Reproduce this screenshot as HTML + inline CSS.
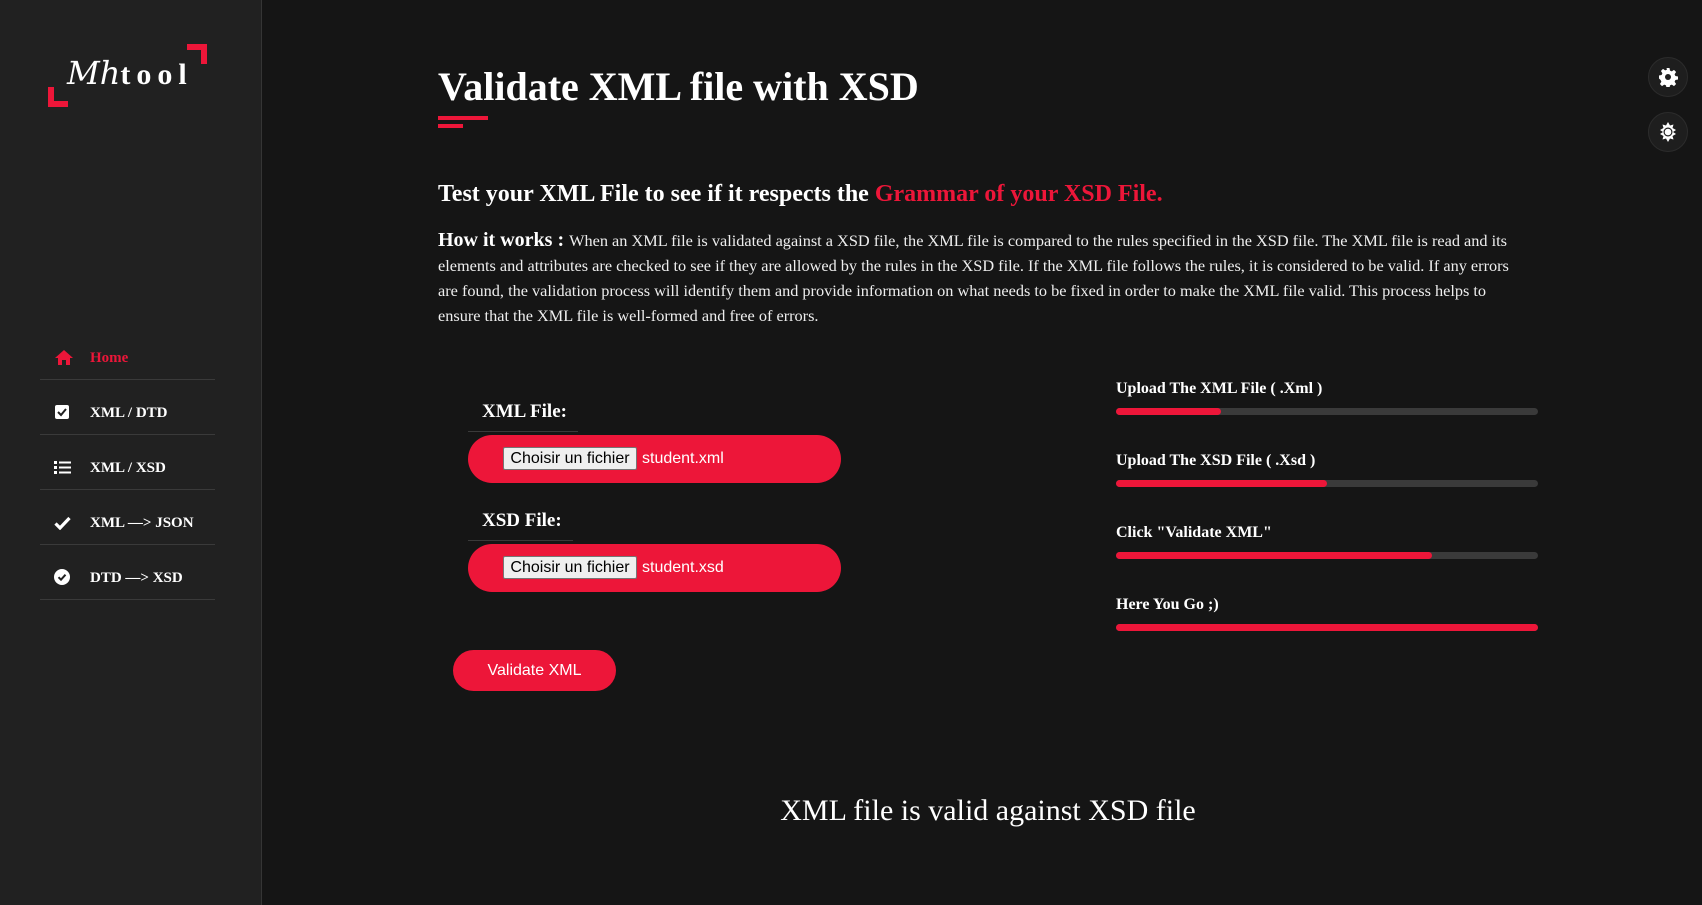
<!DOCTYPE html>
<html><head><meta charset="utf-8"><style>
*{margin:0;padding:0;box-sizing:border-box}
body{width:1702px;height:905px;background:#151515;font-family:"Liberation Serif",serif;color:#fff;position:relative;overflow:hidden}
.side{position:absolute;left:0;top:0;width:262px;height:905px;background:#212121;border-right:1px solid #353535}
.br{position:absolute;width:20px;height:20px;border-color:#ed1639;border-style:solid}
.nav{position:absolute;left:40px;width:175px;border-bottom:1px solid #3a3a3a;height:55px}
.nav span{position:absolute;left:50px;bottom:12px;font-weight:bold;font-size:15px}
.nav svg{position:absolute;left:14px;bottom:14px}
.abs{position:absolute}
h1{position:absolute;left:438px;top:63px;font-size:40px;font-weight:bold;white-space:nowrap}
.pill{position:absolute;left:468px;width:373px;height:48px;border-radius:24px;background:#ed1639}
.fb{position:absolute;left:35px;top:12px;width:134px;height:23px;background:#efefef;border:1px solid #767676;border-radius:2px;color:#000;font:16px "Liberation Sans",sans-serif;text-align:center;line-height:21px}
.fn{position:absolute;left:174px;top:13px;font:16px "Liberation Sans",sans-serif;line-height:22px}
.lbl{position:absolute;font-weight:bold;font-size:16px;left:1116px}
.bar{position:absolute;left:1116px;width:422px;height:7px;border-radius:4px;background:#3a3a3a}
.bar div{height:7px;border-radius:4px;background:#ed1639}
.circ{position:absolute;left:1648px;width:40px;height:40px;border-radius:50%;background:#1e1e1e;border:1px solid #2c2c2c}
</style></head><body>
<div class="side">
 <div class="br" style="left:48px;top:87px;border-width:0 0 6px 6px"></div>
 <div class="br" style="left:187px;top:44px;border-width:6px 6px 0 0"></div>
 <div class="abs" style="left:67px;top:54px;white-space:nowrap"><i style="font-family:'DejaVu Serif',serif;font-size:32px">Mh</i><b style="letter-spacing:6px;font-size:30px">tool</b></div>
 <div class="nav" style="top:325px"><svg width="20" height="16" viewBox="0 0 20 16"><path d="M10 1L1 9h3v7h4v-5h4v5h4V9h3z" fill="#ed1639"/></svg><span style="color:#ed1639">Home</span></div>
 <div class="nav" style="top:380px"><svg width="16" height="16" viewBox="0 0 16 16"><rect x="1" y="1" width="14" height="14" rx="2" fill="#fff"/><path d="M4 8l3 3 5-6" stroke="#212121" stroke-width="2" fill="none"/></svg><span>XML / DTD</span></div>
 <div class="nav" style="top:435px"><svg width="17" height="15" viewBox="0 0 17 15"><g fill="#fff"><rect x="0" y="1" width="3" height="3"/><rect x="0" y="6" width="3" height="3"/><rect x="0" y="11" width="3" height="3"/><rect x="5" y="1.5" width="12" height="2"/><rect x="5" y="6.5" width="12" height="2"/><rect x="5" y="11.5" width="12" height="2"/></g></svg><span>XML / XSD</span></div>
 <div class="nav" style="top:490px"><svg width="17" height="14" viewBox="0 0 17 14"><path d="M1.5 7.5l4.5 4.5 9.5-10" stroke="#fff" stroke-width="3.2" fill="none"/></svg><span>XML —&gt; JSON</span></div>
 <div class="nav" style="top:545px"><svg width="16" height="16" viewBox="0 0 16 16"><circle cx="8" cy="8" r="8" fill="#fff"/><path d="M4.5 8.2l2.5 2.5 4.5-5" stroke="#212121" stroke-width="2" fill="none"/></svg><span>DTD —&gt; XSD</span></div>
</div>
<div class="circ" style="top:57px"><svg style="position:absolute;left:9px;top:9px" width="20" height="20" viewBox="0 0 20 20"><path d="M8.5 1h3l.5 2.6 1.8.8 2.2-1.5 2.1 2.1-1.5 2.2.8 1.8 2.6.5v3l-2.6.5-.8 1.8 1.5 2.2-2.1 2.1-2.2-1.5-1.8.8-.5 2.6h-3l-.5-2.6-1.8-.8-2.2 1.5-2.1-2.1 1.5-2.2-.8-1.8L1 11.5v-3l2.6-.5.8-1.8-1.5-2.2 2.1-2.1 2.2 1.5 1.8-.8z" fill="#fff"/><circle cx="10" cy="10" r="3" fill="#1e1e1e"/></svg></div>
<div class="circ" style="top:112px"><svg style="position:absolute;left:9px;top:9px" width="20" height="20" viewBox="0 0 20 20"><path d="M10 0l2 3.5 3.5-1-1 3.5L18 8l-3 2 3 2-3.5 2 1 3.5-3.5-1L10 20l-2-3.5-3.5 1 1-3.5L2 12l3-2-3-2 3.5-2-1-3.5 3.5 1z" fill="#fff"/><circle cx="10" cy="10" r="4.5" fill="#1e1e1e"/><circle cx="10" cy="10" r="3.3" fill="#fff"/></svg></div>
<h1>Validate XML file with XSD</h1>
<div class="abs" style="left:438px;top:116px;width:50px;height:4px;background:#ed1639"></div>
<div class="abs" style="left:438px;top:124px;width:25px;height:4px;background:#ed1639"></div>
<div class="abs" style="left:438px;top:181px;font-size:24px;font-weight:bold;white-space:nowrap">Test your XML File to see if it respects the <span style="color:#ed1639">Grammar of your XSD File.</span></div>
<div class="abs" style="left:438px;top:228px;width:1090px;font-size:16.3px;line-height:25px;color:#eee"><b style="font-size:20px;color:#fff">How it works : </b>When an XML file is validated against a XSD file, the XML file is compared to the rules specified in the XSD file. The XML file is read and its elements and attributes are checked to see if they are allowed by the rules in the XSD file. If the XML file follows the rules, it is considered to be valid. If any errors are found, the validation process will identify them and provide information on what needs to be fixed in order to make the XML file valid. This process helps to ensure that the XML file is well-formed and free of errors.</div>
<div class="abs" style="left:482px;top:401px;font-size:19px;font-weight:bold">XML File:</div>
<div class="abs" style="left:468px;top:431px;width:110px;height:1px;background:#3a3a3a"></div>
<div class="pill" style="top:435px"><div class="fb">Choisir un fichier</div><div class="fn">student.xml</div></div>
<div class="abs" style="left:482px;top:510px;font-size:19px;font-weight:bold">XSD File:</div>
<div class="abs" style="left:468px;top:540px;width:105px;height:1px;background:#3a3a3a"></div>
<div class="pill" style="top:544px"><div class="fb">Choisir un fichier</div><div class="fn">student.xsd</div></div>
<div class="abs" style="left:453px;top:650px;width:163px;height:41px;border-radius:21px;background:#ed1639;font:16px 'Liberation Sans',sans-serif;text-align:center;line-height:41px">Validate XML</div>
<div class="lbl" style="top:380px">Upload The XML File ( .Xml )</div>
<div class="bar" style="top:408px"><div style="width:105px"></div></div>
<div class="lbl" style="top:452px">Upload The XSD File ( .Xsd )</div>
<div class="bar" style="top:480px"><div style="width:211px"></div></div>
<div class="lbl" style="top:524px">Click "Validate XML"</div>
<div class="bar" style="top:552px"><div style="width:316px"></div></div>
<div class="lbl" style="top:596px">Here You Go ;)</div>
<div class="bar" style="top:624px"><div style="width:422px"></div></div>
<div class="abs" style="left:438px;width:1100px;top:794px;text-align:center;font-size:30px">XML file is valid against XSD file</div>
</body></html>
